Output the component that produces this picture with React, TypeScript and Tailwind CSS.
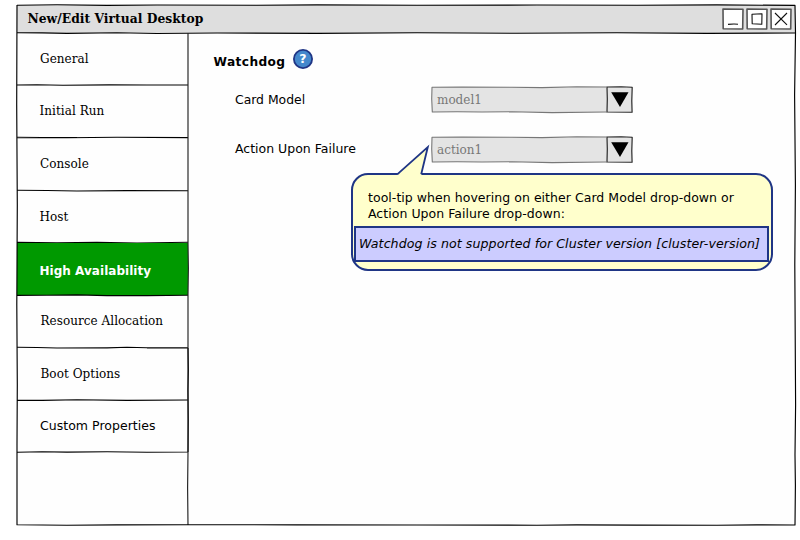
import React from "react";

const SERIF = "font-['DejaVu_Serif',serif]";
const SANS = "font-['DejaVu_Sans',sans-serif]";

/* Hand-drawn stroke that decorates the edges of a box. */
function Sketch({ d, stroke = "#000", width = 1.15 }: { d: string; stroke?: string; width?: number }) {
  return (
    <svg className="pointer-events-none absolute left-0 top-0 h-full w-full overflow-visible" fill="none" stroke={stroke} strokeWidth={width} strokeLinejoin="round">
      <path d={d} />
    </svg>
  );
}

const serifItem = SERIF + " text-[12px] tracking-[0.05px]";

const rows = [
  { label: "General", box: "h-[52px] pl-[23px] pt-[18px]", d: "M0 52 L20 51.8 L46 52.3 L92 51.9 L130 52 L171 52", text: serifItem },
  { label: "Initial Run", box: "h-[53px] pl-[22.5px] pt-[18px]", d: "M0 52.2 L25 52.5 L50 52.8 L100 52.3 L171 52.6 M0 52.6 L60 52.6", text: serifItem },
  { label: "Console", box: "h-[52px] pl-[23px] pt-[18px]", d: "M0 52.3 L30 52.5 L60 53 L110 52.6 L171 52.7", text: serifItem },
  { label: "Host", box: "h-[53px] pl-[22.5px] pt-[19px]", d: "M0 52.4 L40 52.7 L80 52.3 L120 53 L171 52.3", text: serifItem },
  { label: "High Availability", box: "h-[52px] pl-[22.5px] pt-[20px] bg-[#009900] text-white", d: "M0 52.4 L30 52.2 L60 51.9 L90 52.6 L130 52.6 L171 52.3", text: SANS + " text-[12px] font-bold tracking-[0.03px]" },
  { label: "Resource Allocation", box: "h-[53px] pl-[23.5px] pt-[18px]", d: "M0 52.3 L20 52.5 L40 53 L90 52.8 L110 52.3 L130 52.8 L171 52.8", text: serifItem },
  { label: "Boot Options", box: "h-[52px] pl-[23.5px] pt-[18px]", d: "M0 52.3 L25 52.3 L60 51.8 L110 52.4 L171 52", text: serifItem },
  { label: "Custom Properties", box: "h-[52px] pl-[23px] pt-[18px]", d: "M0 52.3 L25 51.7 L50 52.1 L90 51.8 L130 52.3 L171 52 M171 -52 L171.4 -30 L170.9 -10 L171.3 20 L171 52", text: SANS + " text-[12.5px] tracking-[0.03px]" },
];

function WindowButton({ icon }: { icon: string }) {
  return (
    <div className="relative h-5 w-5 bg-white">
      <Sketch d="M0 0 L20 .3 L19.7 20 L.2 19.7 Z" stroke="#555" width={1.6} />
      <Sketch d={icon} stroke="#111" width={1.1} />
    </div>
  );
}

function Dropdown({ value }: { value: string }) {
  return (
    <div className="relative flex h-[25px] w-[200px] bg-[#e4e4e4]">
      <div className={`w-[175px] pl-[5px] pt-[5px] text-[12px] leading-4 text-[#777] ${SERIF}`}>{value}</div>
      <div className="relative flex w-[25px] items-center justify-center">
        <svg width="18" height="15" className="overflow-visible">
          <path d="M.2 0.2 L17.5 .3 L9 15 Z" />
        </svg>
        <Sketch d="M0 0 L14 -.3 L25.2 .3 L24.8 14 L25.1 25.2 L0 25 L.3 12 Z" stroke="#222" />
      </div>
      <Sketch d="M175 0 L145 -.3 L110 .6 L80 .2 L30 .1 L0 .2 L-.3 12 L.3 25 L25 24.8 L50 25 L80 24.8 L120 25.6 L175 25" stroke="#777" width={1.1} />
    </div>
  );
}

export default function App() {
  return (
    <div className="h-[540px] w-[800px] overflow-hidden bg-white pl-[17px] pt-[5px] text-[12.5px] leading-4 text-black">
      <div className="relative flex h-[520px] w-[778px] flex-col bg-[#fefefe]">
        <header className="relative flex h-7 shrink-0 justify-between bg-[#dedede] pl-[10.5px] pr-[4px] pt-1">
          <h1 className={`whitespace-nowrap pt-[1.5px] text-[12.3px] font-bold leading-4 tracking-[0.03px] ${SERIF}`}>New/Edit Virtual Desktop</h1>
          <div className="flex gap-1">
            <WindowButton icon="M5 15.4 Q10 14.8 15 15.2" />
            <WindowButton icon="M5 5.2 L15 4.8 L14.8 15.2 L5.2 14.8 Z" />
            <WindowButton icon="M4 4 L16 15.8 M16 4 L4 16" />
          </div>
          <Sketch d="M0 27.8 L25 27.9 L50 28.4 L100 27.8 L140 28.5 L200 28 L300 28.4 L400 27.7 L500 28.3 L600 27.8 L690 28.4 L778 28" />
        </header>

        <div className="flex grow">
          <nav className="relative w-[171px]">
            {rows.map((r) => (
              <div key={r.label} className={`relative whitespace-nowrap leading-4 ${r.box}`}>
                <div className={r.text}>{r.label}</div>
                <Sketch d={r.d} />
              </div>
            ))}
            <Sketch d="M171 0 L171 210 L171.4 235 L171 262 L171 419 L170.6 455 L171 492" stroke="#222" />
          </nav>

          <main className="pl-[25px] pt-[16px]">
            <div className="flex h-5 gap-[8px]">
              <h2 className={`w-[72px] whitespace-nowrap pl-[0.5px] pt-[5px] text-[12.2px] font-bold leading-4 tracking-[0.4px] ${SANS}`}>Watchdog</h2>
              <svg width="20" height="20" className="overflow-visible">
                <circle cx="10" cy="10" r="9.1" fill="#4488cc" stroke="#1f3585" strokeWidth="1.8" />
                <text x="10" y="14" textAnchor="middle" fill="#fff" className={`text-[12.5px] font-bold ${SANS}`}>?</text>
              </svg>
            </div>
            <div className="flex pl-[22px] pt-[18px]">
              <div className={`w-[197px] whitespace-nowrap pt-[5px] text-[12.4px] ${SANS}`}>Card Model</div>
              <Dropdown value="model1" />
            </div>
            <div className="relative flex pl-[22px] pt-[25px]">
              <div className={`w-[197px] whitespace-nowrap pt-[4px] ${SANS}`}>Action Upon Failure</div>
              <Dropdown value="action1" />

              {/* Tooltip callout with its pointer */}
              <div className={`absolute left-[137.5px] top-[60.5px] h-[98px] w-[422.5px] rounded-[17px] border-2 border-[#1f3585] bg-[#ffffcc] ${SANS}`}>
                <svg width="40" height="32" className="absolute left-[40px] top-[-30px] overflow-visible">
                  <path d="M5 29.5 L35 2 L28.5 29.5 L27.5 32 L4.5 32 Z" fill="#ffffcc" />
                  <path d="M4.5 29.2 L34.8 2 L28.2 29.2" fill="none" stroke="#1f3585" strokeWidth="1.8" />
                </svg>
                <p className="whitespace-nowrap pl-[15.5px] pt-[15px] tracking-[0.04px]">
                  tool-tip when hovering on either Card Model drop-down or<br />Action Upon Failure drop-down:
                </p>
                <div className="ml-[1.5px] mt-[4.5px] h-9 w-[415px] whitespace-nowrap border-2 border-[#1f3585] bg-[#ccccff] pl-[3px] pt-[8px] text-[12.6px] italic tracking-[0.07px]">
                  Watchdog is not supported for Cluster version [cluster-version]
                </div>
              </div>
            </div>
          </main>
        </div>
        <Sketch d="M0 .2 L40 -.2 L90 .4 L140 0 L240 .3 L300 -.1 L400 .3 L520 0 L620 .3 L700 -.1 L778 .4 L778.5 28 L777.6 90 L778.4 180 L777.8 260 L778.6 400 L778 450 L778.4 480 L778 520 L740 519.8 L700 520.3 L620 520.1 L560 519.8 L520 520.2 L400 520 L280 519.8 L170 519.7 L100 519.9 L50 520.3 L0 519.8 L0 440 L.3 380 L-.2 300 L.3 200 L-.3 100 L0 0" />
      </div>
    </div>
  );
}
